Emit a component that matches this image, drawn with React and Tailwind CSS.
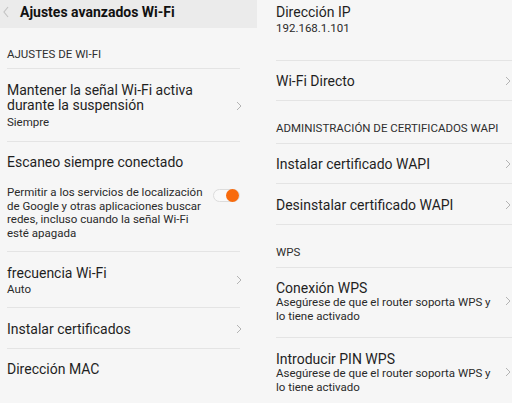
import React from "react";

const Chevron = () => (
  <svg width="6" height="10" viewBox="0 0 6 10" className="shrink-0">
    <path d="M1 1 L5 5 L1 9" fill="none" stroke="#b4b4b4" strokeWidth="1" />
  </svg>
);

const Divider = () => <div className="h-px bg-[#e4e4e4]" />;

const Title = ({ children }) => (
  <div className="text-[14px] leading-[16px] text-[#1f1f1f] whitespace-nowrap">{children}</div>
);
const Sub = ({ children, lh = "leading-[14px]" }) => (
  <div className={`text-[11.5px] ${lh} text-[#2a2a2a] whitespace-nowrap`}>{children}</div>
);
const Section = ({ children, h, pt }) => (
  <div className={`${h} ${pt} text-[11.5px] leading-[14px] text-[#2e2e2e] uppercase whitespace-nowrap`}>{children}</div>
);

export default function App() {
  return (
    <div
      className="w-[512px] h-[403px] overflow-hidden bg-[#f6f6f6] flex"
      style={{ fontFamily: "Roboto, 'Noto Sans', sans-serif" }}
    >
      {/* Left panel */}
      <div className="w-[257px] shrink-0 flex flex-col">
        <div className="h-[28px] bg-[#ebebeb] flex items-center">
          <svg width="8" height="12" viewBox="0 0 8 12" className="ml-[2px] mt-[-4px]">
            <path d="M6 1 L2 6 L6 11" fill="none" stroke="#c4c4c4" strokeWidth="1.2" />
          </svg>
          <div className="ml-[10px] mt-[-4px] text-[14px] font-bold text-[#111] whitespace-nowrap">
            Ajustes avanzados Wi-Fi
          </div>
        </div>
        <div className="pl-[7px] pr-[17px] flex flex-col">
          <Section h="h-[40px]" pt="pt-[19px]">Ajustes de Wi-Fi</Section>
          <Divider />
          <div className="h-[72px] pt-[14px] flex items-center justify-between">
            <div className="self-start">
              <div className="text-[14px] leading-[15px] text-[#1f1f1f] whitespace-nowrap">
                Mantener la señal Wi-Fi activa
                <br />
                durante la suspensión
              </div>
              <div className="mt-[2px]">
                <Sub>Siempre</Sub>
              </div>
            </div>
            <div className="mr-[-2px] mt-[-12px]">
              <Chevron />
            </div>
          </div>
          <Divider />
          <div className="h-[109px] pt-[12px]">
            <Title>Escaneo siempre conectado</Title>
            <div className="mt-[16px] flex justify-between">
              <div className="text-[11.5px] leading-[13.5px] text-[#2a2a2a] whitespace-nowrap">
                Permitir a los servicios de localización
                <br />
                de Google y otras aplicaciones buscar
                <br />
                redes, incluso cuando la señal Wi-Fi
                <br />
                esté apagada
              </div>
              <div className="mt-[3px] w-[27px] h-[13px] rounded-full border border-[#dcdcdc] bg-[#f9f9f9] relative shrink-0">
                <div className="absolute right-[0px] top-[-1px] w-[13px] h-[13px] rounded-full bg-[#f86b0d]" />
              </div>
            </div>
          </div>
          <Divider />
          <div className="h-[55px] pt-[13px] flex justify-between">
            <div>
              <Title>frecuencia Wi-Fi</Title>
              <div className="mt-[1px]">
                <Sub>Auto</Sub>
              </div>
            </div>
            <div className="mr-[-2px] mt-[10px]">
              <Chevron />
            </div>
          </div>
          <Divider />
          <div className="h-[40px] pt-[13px] flex justify-between">
            <Title>Instalar certificados</Title>
            <div className="mr-[-2px] mt-[3px]">
              <Chevron />
            </div>
          </div>
          <Divider />
          <div className="pt-[12px]">
            <Title>Dirección MAC</Title>
          </div>
        </div>
      </div>

      {/* Right panel */}
      <div className="flex-1 min-w-0 pl-[19px] flex flex-col">
        <div className="h-[60px] pt-[4px]">
          <Title>Dirección IP</Title>
          <div className="mt-[1px]">
            <Sub>192.168.1.101</Sub>
          </div>
        </div>
        <Divider />
        <div className="h-[39px] pt-[12px] pr-[1px] flex justify-between">
          <Title>Wi-Fi Directo</Title>
          <div className="mt-[3px]">
            <Chevron />
          </div>
        </div>
        <Divider />
        <Section h="h-[42px]" pt="pt-[20px]">Administración de certificados WAPI</Section>
        <Divider />
        <div className="h-[39px] pt-[12px] pr-[1px] flex justify-between">
          <Title>Instalar certificado WAPI</Title>
          <div className="mt-[3px]">
            <Chevron />
          </div>
        </div>
        <Divider />
        <div className="h-[40px] pt-[13px] pr-[1px] flex justify-between">
          <Title>Desinstalar certificado WAPI</Title>
          <div className="mt-[3px]">
            <Chevron />
          </div>
        </div>
        <Divider />
        <Section h="h-[42px]" pt="pt-[20px]">WPS</Section>
        <Divider />
        <div className="h-[69px] pt-[12px] pr-[1px] flex justify-between">
          <div>
            <Title>Conexión WPS</Title>
            <Sub lh="leading-[13.5px]">
              Asegúrese de que el router soporta WPS y
              <br />
              lo tiene activado
            </Sub>
          </div>
          <div className="mt-[16px]">
            <Chevron />
          </div>
        </div>
        <Divider />
        <div className="pt-[13px] pr-[1px] flex justify-between">
          <div>
            <Title>Introducir PIN WPS</Title>
            <Sub lh="leading-[13.5px]">
              Asegúrese de que el router soporta WPS y
              <br />
              lo tiene activado
            </Sub>
          </div>
          <div className="mt-[16px]">
            <Chevron />
          </div>
        </div>
      </div>
    </div>
  );
}
